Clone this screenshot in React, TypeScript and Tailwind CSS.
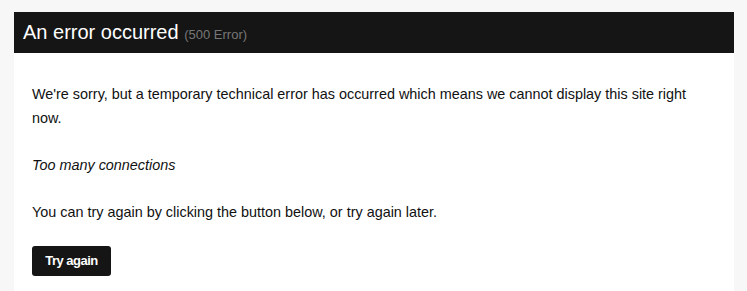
import React from 'react';

const App: React.FC = () => {
  return (
    <div className="min-h-screen bg-[#f7f7f7] px-[14px] pt-[12px] font-['Liberation_Sans',Arial,sans-serif] text-[#111]">
      <div className="bg-white w-[720px]">
        <div className="bg-[#151515] h-[41px] pl-[9px] pr-4 text-[20px] leading-[40px] text-white">
          An error occurred{' '}
          <span className="text-[13px] leading-none text-[#777]">(500 Error)</span>
        </div>
        <div className="pl-[18px] pr-[26px] pt-[30px] pb-10 text-[14.4px] leading-[23.5px]">
          <p className="mb-[23.5px]">
            We're sorry, but a temporary technical error has occurred which means we cannot display this site right now.
          </p>
          <p className="mb-[23.5px] italic">Too many connections</p>
          <p className="mb-[22px]">You can try again by clicking the button below, or try again later.</p>
          <button className="bg-[#151515] text-white font-bold text-[13px] tracking-[-0.5px] leading-[30px] h-[30px] w-[79px] rounded-[3px]">
            Try again
          </button>
        </div>
      </div>
    </div>
  );
};

export default App;
